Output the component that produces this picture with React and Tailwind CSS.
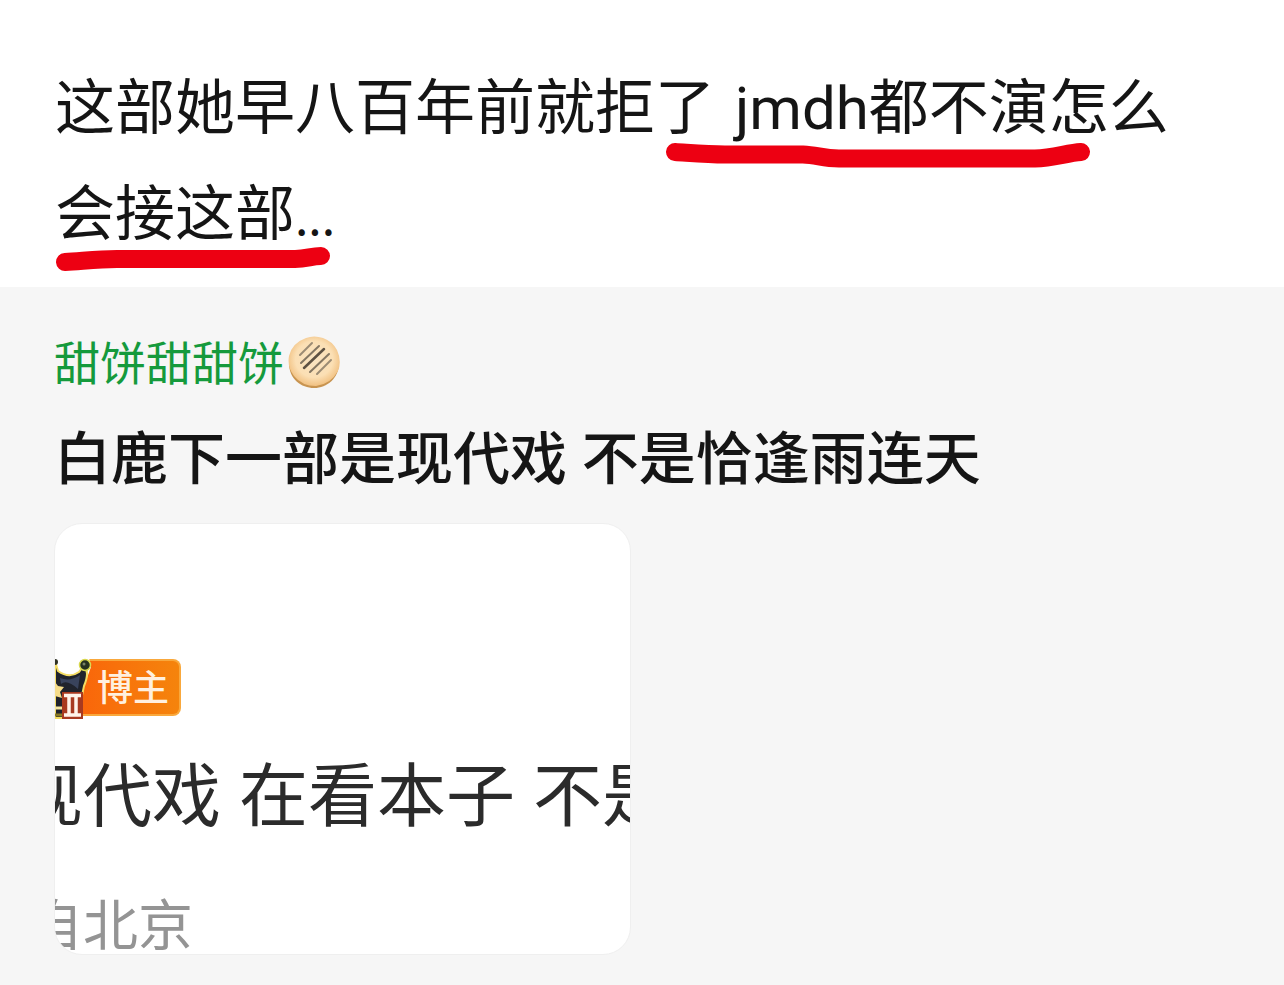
function Marked({ children, line }) {
  return (
    <span className="relative inline-block">
      {children}
      {line}
    </span>
  );
}

function LongStroke() {
  return (
    <svg className="pointer-events-none absolute top-[90px] left-[10px] overflow-visible" width="428" height="28" viewBox="0 0 428 28" fill="none" aria-hidden="true">
      <path d="M10 12 C26 13 42 14.500 60 14.500 H138 C152 15 158 18.500 174 18.500 H370 C388 18 402 13 416 12" stroke="#ed0012" strokeWidth="18" strokeLinecap="round" strokeLinejoin="round" />
    </svg>
  );
}

function ShortStroke() {
  return (
    <svg className="pointer-events-none absolute top-[89px] left-0 overflow-visible" width="280" height="30" viewBox="0 0 280 30" fill="none" aria-hidden="true">
      <path d="M10 17 C28 16 42 14 62 14 H240 C252 14 256 11 266 11" stroke="#ed0012" strokeWidth="18" strokeLinecap="round" strokeLinejoin="round" />
    </svg>
  );
}

function Biscuit() {
  return (
    <svg className="ml-1 shrink-0" width="52" height="52" viewBox="0 0 52 52" role="img" aria-label="饼">
      <defs>
        <radialGradient id="dough" cx="50%" cy="46%" r="52%">
          <stop offset="0" stopColor="#fae4c2" />
          <stop offset="0.7" stopColor="#fbdfb4" />
          <stop offset="1" stopColor="#f2c487" />
        </radialGradient>
      </defs>
      <path d="M1 27 C1 43 13 52 26 52 S51 42 51 27Z" fill="#c89450" />
      <path d="M18 2 Q26 -1 35 2 Q44 5 49 14 Q54 25 50 35 Q43 48 28 50 Q14 50 6 40 Q-1 31 1 20 Q4 7 18 2Z" fill="url(#dough)" />
      <g strokeLinecap="round" strokeWidth="2" stroke="#9b8b74">
        <path d="M12 19 L24 7" />
        <path d="M13 27 L31 10" stroke="#847662" />
        <path d="M16 32 L36 13" stroke="#5e5142" strokeWidth="2.500" />
        <path d="M22 36 L41 18" stroke="#847662" />
        <path d="M29 38 L43 24" />
      </g>
    </svg>
  );
}

function Crown() {
  return (
    <svg className="absolute -top-[3px] left-0" width="44" height="62" viewBox="0 0 44 62" aria-hidden="true">
      <path d="M0 0 H34 L36 9 L29 28 H0Z" fill="#ffffff" />
      <path d="M0 3 L3 13 Q14 21 24 14 L29 7 Q35 14 29 28 L26 42 V60 H0Z" fill="#20232c" stroke="#f4dc62" strokeWidth="2" />
      <path d="M5 20 Q15 24 25 17 L23 31 Q12 21 6 26Z" fill="#39435c" />
      <path d="M0 24 L3 28 L9 29 L5 34 L7 40 L0 38Z" fill="#f5dc8a" />
      <path d="M0 50 H9" stroke="#f5e6a0" strokeWidth="3" />
      <path d="M0 57 H9" stroke="#8a7a24" strokeWidth="3" />
      <circle cx="30" cy="7" r="5.500" fill="#26301f" stroke="#d9d84e" strokeWidth="1.500" />
      <circle cx="29" cy="6" r="1.500" fill="#788265" />
      <circle cx="0" cy="4" r="3" fill="#303225" />
      <path d="M7 34 H28 V61 H7Z" fill="#a83a20" />
      <path d="M9 37.500 H26 M9 57 H26 M14 37 V57 M21 37 V57" stroke="#fff4ea" strokeWidth="3.500" />
    </svg>
  );
}

export default function App() {
  return (
    <main className="flex min-h-screen flex-col bg-white font-['Noto_Sans','Noto_Sans_CJK_SC',sans-serif] text-[#151515]">
      <section className="px-[55px] pt-[50px] pb-[25px]">
        <p className="font-['Noto_Sans_CJK_SC',sans-serif] text-[60px] leading-[106px] whitespace-nowrap">
          这部她早八百年前就拒
          <Marked line={<LongStroke />}>
            了<span className="ml-5 font-['Roboto',sans-serif] leading-none">jmdh</span>都不演怎
          </Marked>
          么
          <br />
          <Marked line={<ShortStroke />}>
            会接这部<span className="text-[48px] leading-none">...</span>
          </Marked>
        </p>
      </section>

      <section className="grow bg-[#f6f6f6] px-[54px] pt-[45px] pb-[31px]">
        <div className="flex items-center text-[46px] leading-[60px] text-[#159a3c]">
          甜饼甜甜饼
          <Biscuit />
        </div>
        <h1 className="mt-[25px] text-[57px] leading-[80px] font-medium whitespace-nowrap">
          白鹿下一部是现代戏 不是恰逢雨连天
        </h1>
        <article className="mt-[26px] flex h-[432px] w-[577px] max-w-full flex-col overflow-hidden rounded-[28px] border border-[#efefef] bg-white pt-[135px]">
          <div className="relative flex h-[57px] w-[126px] shrink-0 items-center justify-end rounded-r-[8px] border-2 border-l-0 border-[#f9a83c] bg-gradient-to-r from-[#fa5c0a] to-[#f5840c] pr-[10px] text-[36px] leading-none font-medium text-[#fff0df]">
            博主
            <Crown />
          </div>
          <p className="-ml-[41px] mt-[28px] text-[69px] leading-[100px] whitespace-nowrap text-[#2b2b2b]">
            现代戏 在看本子 不是
          </p>
          <p className="-ml-[27px] mt-[45px] text-[55px] leading-[70px] whitespace-nowrap text-[#949494]">
            自北京
          </p>
        </article>
      </section>
    </main>
  );
}
